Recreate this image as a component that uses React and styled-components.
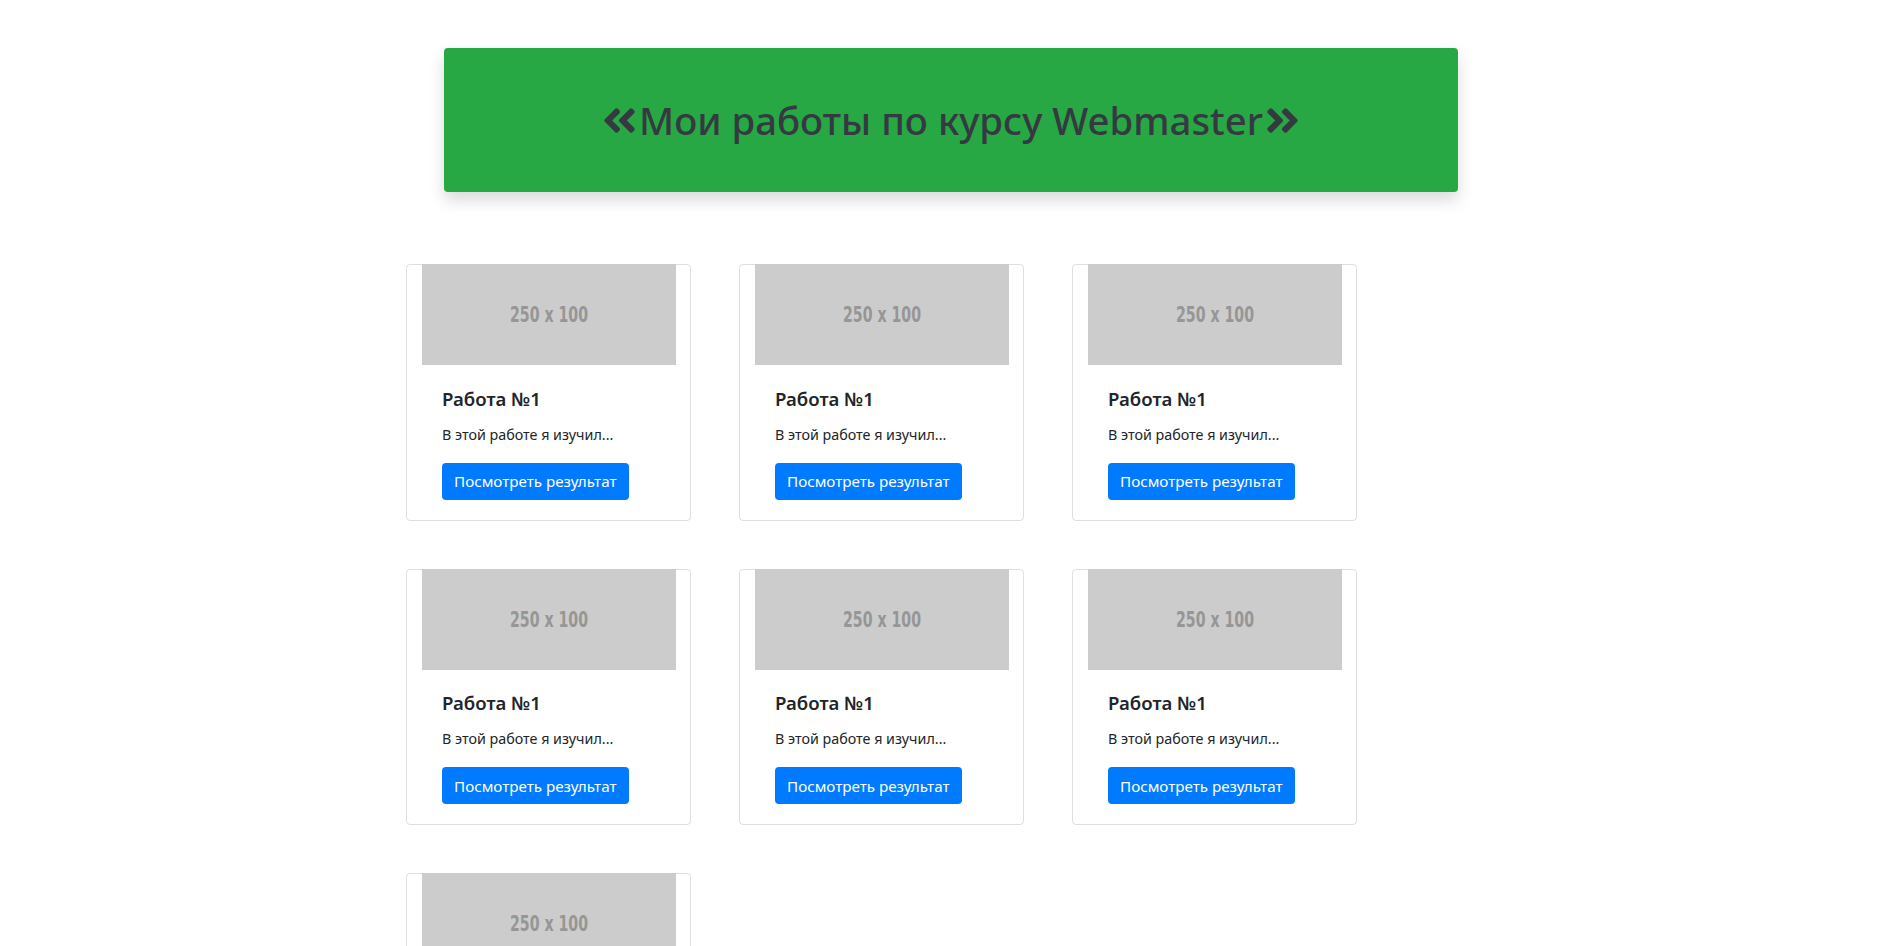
import React from "react";
import styled, { createGlobalStyle } from "styled-components";
import { FaAngleDoubleLeft, FaAngleDoubleRight } from "react-icons/fa";

const GlobalStyle = createGlobalStyle`
  body {
    margin: 0;
    background: #fff;
    font-family: "Noto Sans", "Open Sans", sans-serif;
    color: #212529;
  }
`

const Page = styled.div`
  padding-top: 48px;
`

const Banner = styled.header`
  width: 1014px;
  margin: 0 auto;
  padding: 48px 0;
  background: #28a745;
  border-radius: 4px;
  box-shadow: 0 8px 16px rgba(0, 0, 0, 0.15);
  display: flex;
  justify-content: center;
  align-items: center;
`

const Title = styled.h1`
  margin: 0;
  font-size: 38.3px;
  line-height: 48px;
  font-weight: 500;
  color: #343a40;
  display: flex;
  align-items: center;

  svg {
    flex: none;
  }
`

const Works = styled.div`
  width: 1140px;
  margin: 72px auto 0;
  padding-left: 25px;
  box-sizing: border-box;
  display: grid;
  grid-template-columns: repeat(3, 285px);
  column-gap: 48px;
  row-gap: 48px;
`

const Card = styled.div`
  border: 1px solid rgba(0, 0, 0, 0.125);
  border-radius: 4px;
  display: flex;
  flex-direction: column;
`

const Thumb = styled.svg`
  display: block;
  width: 254px;
  height: 101px;
  margin: -1px auto 0;
`

const CardBody = styled.div`
  padding: 21.5px 20px 20px 35px;
`

const CardTitle = styled.h5`
  margin: 0 0 12px;
  font-size: 18.6px;
  line-height: 24px;
  font-weight: 600;
  color: #212529;
`

const CardText = styled.p`
  margin: 0 0 16px;
  font-size: 14.3px;
  line-height: 24px;
`

const Button = styled.a`
  display: inline-block;
  padding: 6.5px 12px;
  font-size: 15.2px;
  line-height: 24px;
  color: #fff;
  background: #007bff;
  border-radius: 4px;
  text-decoration: none;
`

const works = Array.from({ length: 7 }, (_, i) => ({ id: i, title: "Работа №1" }))

const Placeholder = () => (
  <Thumb viewBox="0 0 254 101">
    <rect width="254" height="101" fill="#cccccc" />
    <text
      x="127"
      y="58"
      textAnchor="middle"
      textLength="78"
      lengthAdjust="spacingAndGlyphs"
      fontFamily="DejaVu Sans Condensed, Liberation Sans, sans-serif"
      fontWeight="700"
      fontSize="22"
      fill="#969696"
    >
      250 x 100
    </text>
  </Thumb>
)

const App = () => {
  return (
    <Page>
      <GlobalStyle />
      <Banner>
        <Title>
          <FaAngleDoubleLeft size={39} />
          Мои работы по курсу Webmaster
          <FaAngleDoubleRight size={39} />
        </Title>
      </Banner>
      <Works>
        {works.map(w => (
          <Card key={w.id}>
            <Placeholder />
            <CardBody>
              <CardTitle>{w.title}</CardTitle>
              <CardText>В этой работе я изучил...</CardText>
              <Button href="#">Посмотреть результат</Button>
            </CardBody>
          </Card>
        ))}
      </Works>
    </Page>
  )
}

export default App
